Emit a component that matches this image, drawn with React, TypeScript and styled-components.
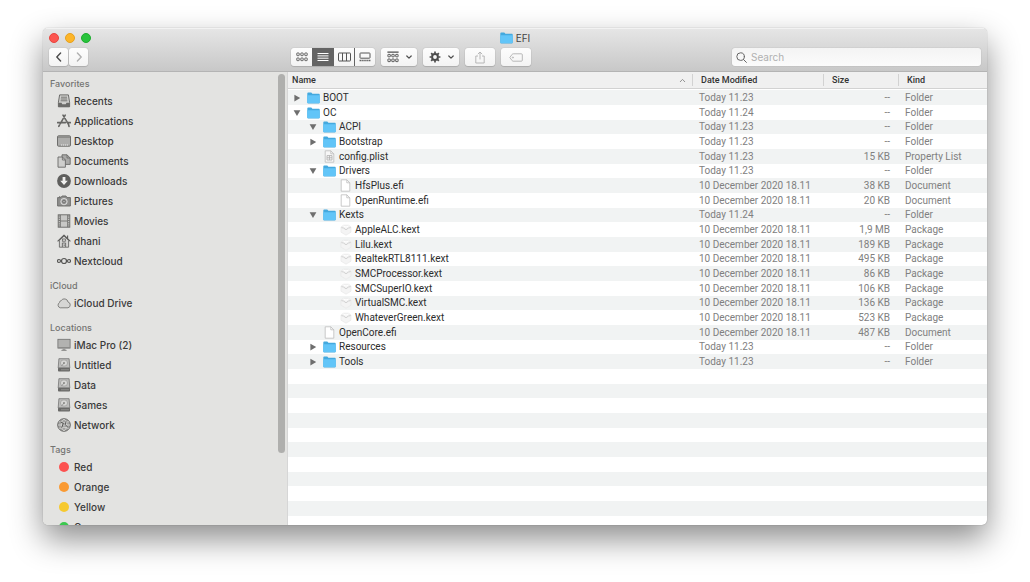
import React from "react";
import styled, { createGlobalStyle } from "styled-components";

const GlobalStyle = createGlobalStyle`
  * { box-sizing: border-box; }
  body {
    margin: 0;
    background: #fff;
    color: #3a3a3a;
    font: 10px/12px Inter, "Liberation Sans", sans-serif;
    overflow: hidden;
  }
  button, input { font: inherit; color: inherit; }
  button { appearance: none; border: 0; padding: 0; margin: 0; background: none; }
  svg { display: block; flex: none; }
`;

const Desktop = styled.div`
  min-height: 100vh;
  padding: 28px 43px 57px;
`;

const Window = styled.div`
  display: flex;
  flex-direction: column;
  height: calc(100vh - 85px);
  border-radius: 5px;
  overflow: hidden;
  background: #fff;
  box-shadow: 0 0 1px rgba(0, 0, 0, 0.45), 0 14px 32px rgba(0, 0, 0, 0.45);
`;

const TitleBar = styled.header`
  flex: none;
  height: 44px;
  background: linear-gradient(#e6e6e6, #c8c8c8);
  border-bottom: 1px solid #b4b4b4;
  box-shadow: inset 0 1px #f2f2f2;
`;

const TitleRow = styled.div`
  display: grid;
  grid-template-columns: 1fr auto 1fr;
  align-items: center;
  height: 20px;
  padding: 0 6px;
`;

const Lights = styled.div`
  display: flex;
  gap: 6px;
`;

const Light = styled.button<{ $fill: string; $edge: string }>`
  width: 10px;
  height: 10px;
  border-radius: 50%;
  background: ${(p) => p.$fill};
  border: 1px solid ${(p) => p.$edge};
`;

const Title = styled.h1`
  display: flex;
  align-items: center;
  gap: 3px;
  margin: 0;
  font-size: 10px;
  font-weight: 400;
  color: #444;
`;

const Toolbar = styled.div`
  display: flex;
  align-items: center;
  gap: 6px;
  padding: 0 6px;
`;

const NavArea = styled.nav`
  display: flex;
  gap: 1px;
  width: 236px;
`;

const ToolButton = styled.button<{ $w: number; $dim?: boolean }>`
  display: flex;
  align-items: center;
  justify-content: center;
  gap: 7px;
  width: ${(p) => p.$w}px;
  height: 18px;
  border-radius: 3px;
  background: linear-gradient(#fdfdfd, #f3f3f3);
  box-shadow: 0 0 1px rgba(0, 0, 0, 0.35), 0 1px 1px rgba(0, 0, 0, 0.12);
  color: ${(p) => (p.$dim ? "#b0b0b0" : "#4c4c4c")};
`;

const Segments = styled.div`
  display: flex;
  height: 18px;
  border-radius: 3px;
  overflow: hidden;
  background: linear-gradient(#fdfdfd, #f3f3f3);
  box-shadow: 0 0 1px rgba(0, 0, 0, 0.35), 0 1px 1px rgba(0, 0, 0, 0.12);
`;

const Segment = styled.button<{ $on?: boolean }>`
  display: grid;
  place-items: center;
  width: 21px;
  color: ${(p) => (p.$on ? "#fff" : "#555")};
  background: ${(p) => (p.$on ? "#646464" : "transparent")};
  & + & { border-left: 1px solid ${(p) => (p.$on ? "#646464" : "#dcdcdc")}; }
`;

const SearchBox = styled.label`
  display: flex;
  align-items: center;
  gap: 4px;
  width: 249px;
  height: 18px;
  margin-left: auto;
  padding: 0 4px;
  border-radius: 3px;
  background: linear-gradient(#f4f4f4, #fbfbfb);
  box-shadow: 0 0 1px rgba(0, 0, 0, 0.35);
  color: #666;
`;

const SearchInput = styled.input`
  flex: 1;
  min-width: 0;
  padding: 0;
  border: 0;
  outline: 0;
  background: none;
  &::placeholder { color: #b0b0b0; opacity: 1; }
`;

const Body = styled.div`
  display: flex;
  flex: 1;
  min-height: 0;
`;

const Sidebar = styled.aside`
  display: flex;
  flex: none;
  width: 245px;
  overflow: hidden;
  background: #e3e3e1;
  border-right: 1px solid #d6d6d6;
`;

const Places = styled.div`
  display: flex;
  flex: 1;
  flex-direction: column;
  gap: 8px;
  padding: 5px 0 0 7px;
`;

const ScrollTrack = styled.div`
  width: 9px;
  padding: 2px 2px 0 0;
`;

const ScrollThumb = styled.div`
  height: 84%;
  border-radius: 4px;
  background: #afafad;
`;

const GroupTitle = styled.h2`
  margin: 0;
  height: 14px;
  font-size: 9px;
  line-height: 14px;
  font-weight: 500;
  color: #747472;
`;

const List = styled.ul`
  margin: 0;
  padding: 0;
  list-style: none;
`;

const PlaceLink = styled.a`
  display: flex;
  align-items: center;
  gap: 3px;
  height: 20px;
  padding-left: 7px;
  color: #3a3a3a;
  font-weight: 500;
  text-decoration: none;
  white-space: nowrap;
`;

const Dot = styled.span<{ $color: string }>`
  width: 10px;
  height: 10px;
  margin: 0 2px;
  border-radius: 50%;
  background: ${(p) => p.$color};
`;

const Listing = styled.main`
  flex: 1;
  min-width: 0;
  overflow: hidden;
`;

const Table = styled.table`
  width: 100%;
  table-layout: fixed;
  border-collapse: collapse;
  font-family: Roboto, "Liberation Sans", sans-serif;
`;

const Col = styled.col<{ $w?: number }>`
  width: ${(p) => (p.$w ? p.$w + "px" : "auto")};
`;

const HeadCell = styled.th`
  height: 18px;
  padding: 2px 0 4px;
  background: #f0f0f0;
  box-shadow: inset 0 -1px #fff, inset 0 -2px #d2d2d2;
  font-size: 9px;
  font-weight: 500;
  text-align: left;
  color: #333;
`;

const HeadLabel = styled.div<{ $first?: boolean }>`
  display: flex;
  align-items: center;
  justify-content: space-between;
  height: 12px;
  padding: 0 6px 0 ${(p) => (p.$first ? 4 : 8)}px;
  border-left: ${(p) => (p.$first ? "0" : "1px solid #d2d2d2")};
`;

const Row = styled.tr`
  height: 15px;
  &:nth-child(3n) { height: 14px; }
  &:nth-child(odd) { background: #f1f3f3; }
`;

const Cell = styled.td<{ $right?: boolean }>`
  padding: 0 8px 0 7px;
  color: #808080;
  white-space: nowrap;
  text-align: ${(p) => (p.$right ? "right" : "left")};
`;

const NameCell = styled.td`
  padding: 0;
`;

const Entry = styled.div<{ $level: number }>`
  display: flex;
  align-items: center;
  height: 14px;
  padding-left: ${(p) => 5 + p.$level * 16}px;
  color: #2c2c2c;
  white-space: nowrap;
`;

const Toggle = styled.button`
  display: grid;
  place-items: center;
  width: 8px;
  height: 8px;
  color: #6e6e6e;
`;

const Spacer = styled.span`
  width: 8px;
`;

const IconSlot = styled.span`
  display: grid;
  place-items: center;
  width: 13px;
  margin: 0 3px 0 6px;
`;

const Folder = () => (
  <svg width="13" height="12" viewBox="0 0 13 12">
    <path d="M0.3 1.6Q0.3 .6 1.2.6H4.3L5.4 1.8H12Q12.7 1.8 12.7 2.6V10.4Q12.7 11.4 11.8 11.4H1.2Q.3 11.4.3 10.4Z" fill="#44a9de" />
    <path d="M.3 3.2H12.7V10.4Q12.7 11.1 12 11.1H1Q.3 11.1.3 10.4Z" fill="#62c5f8" />
  </svg>
);

const Doc = ({ plist }: { plist?: boolean }) => (
  <svg width="11" height="13" viewBox="0 0 11 13" fill="none">
    <path d="M1.2.8H6.8L9.8 3.8V12.2H1.2Z" fill={plist ? "#f7f7f7" : "#fff"} stroke="#bcbcbc" strokeWidth=".8" />
    <path d="M6.8.8V3.8H9.8" stroke="#bcbcbc" strokeWidth=".8" />
    {plist && <path d="M3 5.6H8V10H3ZM5.5 5.6V10M3 7.8H8" stroke="#b4b4b4" strokeWidth=".9" />}
  </svg>
);

const Kext = () => (
  <svg width="12" height="12" viewBox="0 0 12 12" fill="none">
    <path d="M1 3L3.5 1.2H8.5L11 3V8.2L6 11.2L1 8.2Z" fill="#f4f4f4" stroke="#e6e6e6" strokeWidth=".6" />
    <path d="M1.4 3.6Q3.6 3.4 6 5.8Q8.4 3.4 10.6 3.6" stroke="#cdcdcd" strokeWidth=".9" />
    <path d="M3.6 2L6 3.2L8.4 2" stroke="#fff" strokeWidth="1" />
  </svg>
);

const Triangle = ({ open }: { open?: boolean }) => (
  <svg width="8" height="8" viewBox="0 0 8 8" fill="currentColor">
    <path d={open ? "M.6 1.2H7.4L4 7Z" : "M1.4.8V7.4L7.2 4.1Z"} />
  </svg>
);

const Chevron = ({ d, size = 10, w = 1.4 }: { d: string; size?: number; w?: number }) => (
  <svg width={size} height={size} viewBox="0 0 10 10" fill="none" stroke="currentColor" strokeWidth={w} strokeLinecap="round" strokeLinejoin="round">
    <path d={d} />
  </svg>
);

const DownChevron = () => (
  <svg width="6" height="6" viewBox="0 0 6 6" fill="none" stroke="currentColor" strokeWidth="1.2" strokeLinecap="round" strokeLinejoin="round">
    <path d="M.8 2L3 4.2L5.2 2" />
  </svg>
);

const gearTeeth = Array.from({ length: 8 }, (_, i) => i * 45);

const glyphs: Record<string, React.ReactNode> = {
  recents: (
    <>
      <path d="M2.6 .9H11.4L12.6 8.4V12.8H1.4V8.4Z" fill="#cfcfcd" stroke="#6c6c6a" strokeLinejoin="round" />
      <path d="M4 3.2H10M3.8 5H10.2M3.6 6.8H10.4" stroke="#6c6c6a" strokeWidth=".9" />
      <path d="M1.2 8.8H4.5L5.3 10.2H8.7L9.5 8.8H12.8V13H1.2Z" fill="#6c6c6a" />
    </>
  ),
  applications: (
    <>
      <path d="M8.2 1.2L3.2 9.8M6 1.2L11.6 10.6L12 12.4M.5 8.6H8.6M11 8.6H13.5M2.4 11.2L1.8 12.4" stroke="#666664" strokeWidth="1.6" strokeLinecap="round" />
      <path d="M7 4.5L9.2 8.2" stroke="#a8a8a6" strokeWidth=".6" />
    </>
  ),
  desktop: (
    <>
      <rect x=".5" y="1.8" width="13" height="10.4" rx="1" fill="#adadab" stroke="#6e6e6c" />
      <path d="M1 3.2H13" stroke="#6e6e6c" strokeWidth=".7" />
      <path d="M4 11H11" stroke="#eee" strokeWidth="1.2" strokeDasharray="1.2 .8" />
    </>
  ),
  documents: (
    <>
      <path d="M5 .8H10L13.2 4V10.4H5Z" fill="#aaaaa8" stroke="#6a6a68" strokeWidth=".9" />
      <path d="M10 .8V4H13.2" stroke="#6a6a68" strokeWidth=".8" />
      <path d="M1 3H5.4L8.4 6V13.2H1Z" fill="#cececc" stroke="#6a6a68" strokeWidth=".9" />
      <path d="M5.4 3V6H8.4" stroke="#6a6a68" strokeWidth=".8" />
    </>
  ),
  downloads: (
    <>
      <circle cx="7" cy="7" r="6.9" fill="#5f5f5d" />
      <path d="M5.6 3H8.4V6.8H10.8L7 11L3.2 6.8H5.6Z" fill="#f0f0ee" />
    </>
  ),
  pictures: (
    <>
      <path d="M.6 3.6H4L5 2H9L10 3.6H13.4V12H.6Z" fill="#8e8e8c" stroke="#6a6a68" strokeWidth=".9" strokeLinejoin="round" />
      <circle cx="7" cy="7.6" r="3.2" fill="#a8a8a6" stroke="#ddd" strokeWidth=".9" />
      <circle cx="7" cy="7.6" r="1.5" stroke="#666" strokeWidth=".9" />
      <path d="M2 2.8H3.4" stroke="#6a6a68" />
    </>
  ),
  movies: (
    <>
      <rect x="1.2" y=".8" width="11.6" height="12.4" fill="#c8c8c6" stroke="#686866" strokeWidth=".9" />
      <path d="M3.4 1V13M10.6 1V13M3.4 7H10.6" stroke="#686866" strokeWidth=".8" />
      <path d="M2.2 1.6V13M11.8 1.6V13" stroke="#686866" strokeWidth="1.2" strokeDasharray="1 1.2" />
    </>
  ),
  home: (
    <>
      <path d="M2.4 6.4V13.2H11.6V6.4L7 2Z" fill="#d4d4d2" stroke="#686866" strokeWidth=".9" />
      <path d="M.6 7.4L7 1.2L13.4 7.4M10.6 1.6V4.4" stroke="#5c5c5a" strokeWidth="1.1" strokeLinejoin="round" />
      <rect x="5.6" y="5" width="2.8" height="2.2" stroke="#5c5c5a" strokeWidth=".7" />
      <path d="M5.4 13V9H8.6V13" stroke="#5c5c5a" strokeWidth=".8" />
      <path d="M7.2 10.4V12" stroke="#5c5c5a" strokeWidth=".8" />
    </>
  ),
  nextcloud: (
    <g stroke="#555553" strokeWidth="1.2">
      <circle cx="7" cy="7" r="2.5" />
      <circle cx="2" cy="7" r="1.5" />
      <circle cx="12" cy="7" r="1.5" />
    </g>
  ),
  cloud: (
    <path d="M3.2 11.8A2.8 2.8 0 0 1 2.4 6.7A2.2 2.2 0 0 1 4.2 4.6A3.7 3.7 0 0 1 11 6A3 3 0 0 1 11 11.8Z" fill="#d6d6d4" stroke="#777775" strokeWidth=".9" />
  ),
  imac: (
    <>
      <rect x=".9" y="1.3" width="12.2" height="8.8" fill="#b2b2b0" stroke="#70706e" strokeWidth=".8" />
      <path d="M1 9.6H13" stroke="#8a8a88" />
      <path d="M5.8 10.4H8.2L8.6 12H5.4Z" fill="#9c9c9a" />
      <path d="M4.4 12.4H9.6" stroke="#80807e" strokeWidth=".9" />
    </>
  ),
  disk: (
    <>
      <path d="M1.9 .7H12.1L12.8 10H1.2Z" fill="#bdbdbb" stroke="#757573" strokeWidth=".8" />
      <rect x="1" y="9.8" width="12" height="3.8" rx=".8" fill="#6a6a68" />
      <ellipse cx="7" cy="5" rx="3.6" ry="3.2" fill="#d6d6d4" stroke="#9a9a98" strokeWidth=".7" />
      <path d="M7 5L4.4 8.2" stroke="#8c8c8a" strokeWidth=".8" />
      <circle cx="7" cy="5" r=".9" fill="#80807e" />
      <path d="M4.4 11.7H11.6" stroke="#a8a8a6" strokeWidth="1.1" strokeDasharray="1.2 .8" />
    </>
  ),
  network: (
    <>
      <circle cx="7" cy="7" r="6.3" fill="#a2a2a0" stroke="#686866" strokeWidth="1" />
      <path d="M7 1C3.4 4 3.4 10 7 13C10.6 10 10.6 4 7 1M1 7H13M2.2 3.6Q7 6 11.8 3.6M2.2 10.4Q7 8 11.8 10.4" stroke="#e2e2e0" strokeWidth=".7" />
      <path d="M3.4 4L6.4 5.2L4.6 9.8M9 3.4L8.4 6.6L10.8 9.4" stroke="#5a5a58" strokeWidth="1" />
    </>
  ),
};

const PlaceIcon = ({ name }: { name: string }) => (
  <svg width="14" height="14" viewBox="0 0 14 14" fill="none">
    {glyphs[name]}
  </svg>
);

type Place = { label: string; icon?: string; tag?: string };
const groups: { title: string; places: Place[] }[] = [
  {
    title: "Favorites",
    places: [
      { label: "Recents", icon: "recents" },
      { label: "Applications", icon: "applications" },
      { label: "Desktop", icon: "desktop" },
      { label: "Documents", icon: "documents" },
      { label: "Downloads", icon: "downloads" },
      { label: "Pictures", icon: "pictures" },
      { label: "Movies", icon: "movies" },
      { label: "dhani", icon: "home" },
      { label: "Nextcloud", icon: "nextcloud" },
    ],
  },
  { title: "iCloud", places: [{ label: "iCloud Drive", icon: "cloud" }] },
  {
    title: "Locations",
    places: [
      { label: "iMac Pro (2)", icon: "imac" },
      { label: "Untitled", icon: "disk" },
      { label: "Data", icon: "disk" },
      { label: "Games", icon: "disk" },
      { label: "Network", icon: "network" },
    ],
  },
  {
    title: "Tags",
    places: [
      { label: "Red", tag: "#fc5250" },
      { label: "Orange", tag: "#f99a33" },
      { label: "Yellow", tag: "#f6c92f" },
      { label: "Green", tag: "#3cc84f" },
    ],
  },
];

type Item = {
  name: string;
  level: number;
  icon: "folder" | "doc" | "plist" | "kext";
  open?: boolean;
  date: string;
  size: string;
  kind: string;
};

const DEC = "10 December 2020 18.11";
const folder = (name: string, level: number, date: string, open = false): Item => ({
  name, level, icon: "folder", open, date, size: "--", kind: "Folder",
});
const kext = (name: string, size: string): Item => ({
  name, level: 2, icon: "kext", date: DEC, size, kind: "Package",
});
const efi = (name: string, level: number, size: string): Item => ({
  name, level, icon: "doc", date: DEC, size, kind: "Document",
});

const items: Item[] = [
  folder("BOOT", 0, "Today 11.23"),
  folder("OC", 0, "Today 11.24", true),
  folder("ACPI", 1, "Today 11.23", true),
  folder("Bootstrap", 1, "Today 11.23"),
  { name: "config.plist", level: 1, icon: "plist", date: "Today 11.23", size: "15 KB", kind: "Property List" },
  folder("Drivers", 1, "Today 11.23", true),
  efi("HfsPlus.efi", 2, "38 KB"),
  efi("OpenRuntime.efi", 2, "20 KB"),
  folder("Kexts", 1, "Today 11.24", true),
  kext("AppleALC.kext", "1,9 MB"),
  kext("Lilu.kext", "189 KB"),
  kext("RealtekRTL8111.kext", "495 KB"),
  kext("SMCProcessor.kext", "86 KB"),
  kext("SMCSuperIO.kext", "106 KB"),
  kext("VirtualSMC.kext", "136 KB"),
  kext("WhateverGreen.kext", "523 KB"),
  efi("OpenCore.efi", 1, "487 KB"),
  folder("Resources", 1, "Today 11.23"),
  folder("Tools", 1, "Today 11.23"),
];

const blankRows = Array.from({ length: 12 }, (_, i) => i);

const itemIcon = (kind: Item["icon"]) =>
  kind === "folder" ? <Folder /> : kind === "kext" ? <Kext /> : <Doc plist={kind === "plist"} />;

export default function App() {
  return (
    <>
      <GlobalStyle />
      <Desktop>
        <Window>
          <TitleBar>
            <TitleRow>
              <Lights>
                <Light aria-label="Close" $fill="#fc5650" $edge="#e8453f" />
                <Light aria-label="Minimize" $fill="#fdb528" $edge="#e5a01f" />
                <Light aria-label="Zoom" $fill="#28c33c" $edge="#1dac2e" />
              </Lights>
              <Title>
                <Folder />
                EFI
              </Title>
            </TitleRow>
            <Toolbar>
              <NavArea aria-label="History">
                <ToolButton $w={19} aria-label="Back">
                  <Chevron d="M6.6 1L2.8 5L6.6 9" />
                </ToolButton>
                <ToolButton $w={19} $dim aria-label="Forward">
                  <Chevron d="M3.4 1L7.2 5L3.4 9" />
                </ToolButton>
              </NavArea>
              <Segments role="group" aria-label="View">
                <Segment aria-label="Icons">
                  <svg width="12" height="10" viewBox="0 0 12 10" fill="none" stroke="currentColor" strokeWidth=".9">
                    {[0.8, 4.8, 8.8].map((x) => (
                      <g key={x}>
                        <rect x={x} y="1" width="2.4" height="2.6" rx=".4" />
                        <rect x={x} y="6" width="2.4" height="2.6" rx=".4" />
                      </g>
                    ))}
                  </svg>
                </Segment>
                <Segment $on aria-label="List" aria-pressed>
                  <svg width="12" height="10" viewBox="0 0 12 10" stroke="currentColor">
                    <path d="M.5 1.5H11.5M.5 3.9H11.5M.5 6.2H11.5M.5 8.5H11.5" />
                  </svg>
                </Segment>
                <Segment aria-label="Columns">
                  <svg width="13" height="10" viewBox="0 0 13 10" fill="none" stroke="currentColor">
                    <rect x=".5" y="1" width="12" height="8" rx=".6" />
                    <path d="M4.5 1V9M8.5 1V9" />
                  </svg>
                </Segment>
                <Segment aria-label="Gallery">
                  <svg width="12" height="10" viewBox="0 0 12 10" fill="none" stroke="currentColor">
                    <rect x="1" y="1" width="10" height="5.2" rx=".6" />
                    <path d="M.6 8.4H11.4" strokeWidth="1.5" strokeDasharray="1.3 .6" />
                  </svg>
                </Segment>
              </Segments>
              <ToolButton $w={36} aria-label="Group items">
                <svg width="12" height="12" viewBox="0 0 12 12" fill="none" stroke="currentColor" strokeWidth=".9">
                  <path d="M.4 1.2H11.6" strokeWidth="1.2" />
                  {[0.9, 4.8, 8.7].map((x) => (
                    <g key={x}>
                      <rect x={x} y="3.4" width="2.4" height="2.4" rx=".3" />
                      <rect x={x} y="8" width="2.4" height="2.6" rx=".3" />
                    </g>
                  ))}
                </svg>
                <DownChevron />
              </ToolButton>
              <ToolButton $w={36} aria-label="Actions">
                <svg width="12" height="12" viewBox="0 0 12 12" fill="none" stroke="currentColor">
                  <circle cx="6" cy="6" r="2.9" strokeWidth="2" />
                  {gearTeeth.map((a) => (
                    <path key={a} d="M6 .6V2.6" strokeWidth="1.7" transform={`rotate(${a} 6 6)`} />
                  ))}
                </svg>
                <DownChevron />
              </ToolButton>
              <ToolButton $w={30} $dim aria-label="Share">
                <svg width="12" height="13" viewBox="0 0 12 13" fill="none" stroke="currentColor" strokeWidth=".9">
                  <path d="M4 5H1.8V12H10.2V5H8M6 8.4V1.2M3.8 3.2L6 1L8.2 3.2" />
                </svg>
              </ToolButton>
              <ToolButton $w={30} $dim aria-label="Edit tags">
                <svg width="14" height="9" viewBox="0 0 14 9" fill="none" stroke="currentColor" strokeWidth=".9">
                  <path d="M4.2.8H12.4Q13.3.8 13.3 1.7V7.3Q13.3 8.2 12.4 8.2H4.2Q3.6 8.2 3.2 7.7L.8 4.5L3.2 1.3Q3.6.8 4.2.8Z" />
                  <circle cx="3.9" cy="4.5" r=".6" />
                </svg>
              </ToolButton>
              <SearchBox>
                <svg width="11" height="11" viewBox="0 0 11 11" fill="none" stroke="currentColor" strokeWidth="1" strokeLinecap="round">
                  <circle cx="4.6" cy="4.6" r="3.8" />
                  <path d="M7.4 7.4L10.4 10.4" />
                </svg>
                <SearchInput type="text" placeholder="Search" aria-label="Search" />
              </SearchBox>
            </Toolbar>
          </TitleBar>
          <Body>
            <Sidebar>
              <Places>
                {groups.map((g) => (
                  <section key={g.title}>
                    <GroupTitle>{g.title}</GroupTitle>
                    <List>
                      {g.places.map((p) => (
                        <li key={p.label}>
                          <PlaceLink href="#">
                            {p.icon ? <PlaceIcon name={p.icon} /> : <Dot $color={p.tag || ""} />}
                            {p.label}
                          </PlaceLink>
                        </li>
                      ))}
                    </List>
                  </section>
                ))}
              </Places>
              <ScrollTrack aria-hidden>
                <ScrollThumb />
              </ScrollTrack>
            </Sidebar>
            <Listing>
              <Table>
                <colgroup>
                  <Col />
                  <Col $w={131} />
                  <Col $w={75} />
                  <Col $w={89} />
                </colgroup>
                <thead>
                  <tr>
                    <HeadCell scope="col" aria-sort="ascending">
                      <HeadLabel $first>
                        Name
                        <svg width="7" height="5" viewBox="0 0 7 5" fill="none" stroke="#888" strokeWidth=".9">
                          <path d="M1 4L3.5 1.4L6 4" />
                        </svg>
                      </HeadLabel>
                    </HeadCell>
                    <HeadCell scope="col"><HeadLabel>Date Modified</HeadLabel></HeadCell>
                    <HeadCell scope="col"><HeadLabel>Size</HeadLabel></HeadCell>
                    <HeadCell scope="col"><HeadLabel>Kind</HeadLabel></HeadCell>
                  </tr>
                </thead>
                <tbody>
                  {items.map((it) => (
                    <Row key={it.name}>
                      <NameCell>
                        <Entry $level={it.level}>
                          {it.icon === "folder" ? (
                            <Toggle aria-label={`Toggle ${it.name}`} aria-expanded={it.open}>
                              <Triangle open={it.open} />
                            </Toggle>
                          ) : (
                            <Spacer />
                          )}
                          <IconSlot>{itemIcon(it.icon)}</IconSlot>
                          {it.name}
                        </Entry>
                      </NameCell>
                      <Cell>{it.date}</Cell>
                      <Cell $right>{it.size}</Cell>
                      <Cell>{it.kind}</Cell>
                    </Row>
                  ))}
                  {blankRows.map((i) => (
                    <Row key={i} aria-hidden>
                      <Cell colSpan={4} />
                    </Row>
                  ))}
                </tbody>
              </Table>
            </Listing>
          </Body>
        </Window>
      </Desktop>
    </>
  );
}
